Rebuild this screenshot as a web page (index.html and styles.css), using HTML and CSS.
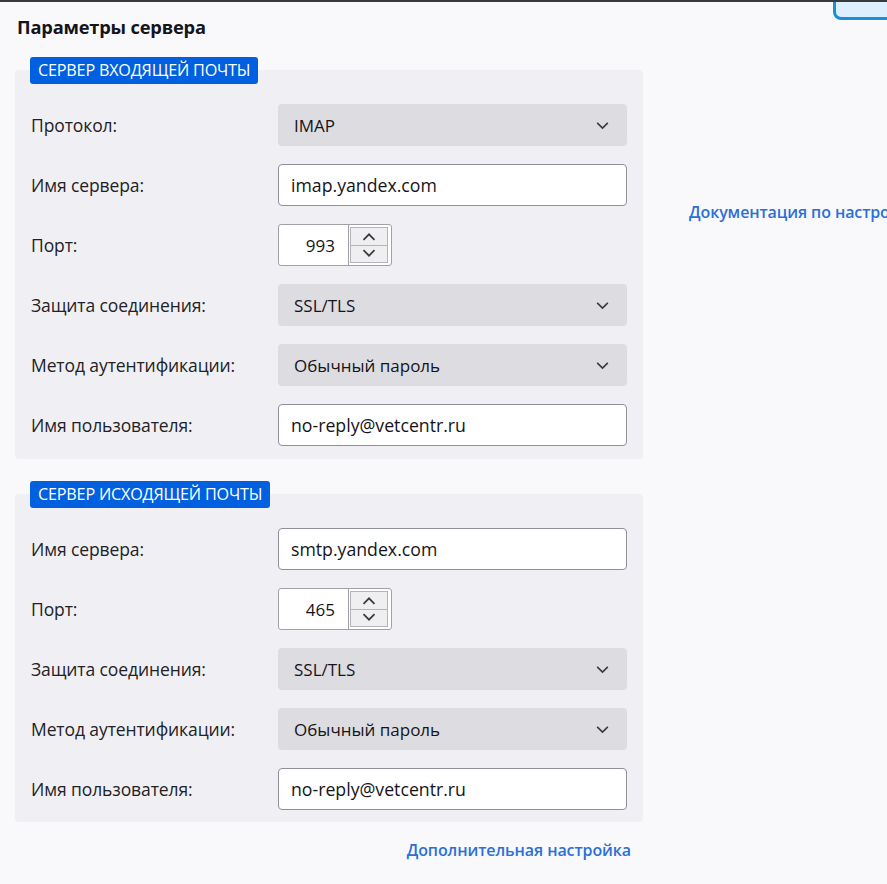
FILE: index.html
```html
<!DOCTYPE html>
<html lang="ru">
<head>
<meta charset="utf-8">
<link rel="stylesheet" href="styles.css">
</head>
<body>
<div class="page">
  <div class="main">
    <h1 class="title">Параметры сервера</h1>

    <div class="group">
      <div class="badge">Сервер входящей почты</div>
      <div class="box box-in">
        <div class="row"><span class="label">Протокол:</span><div class="select"><span>IMAP</span><svg class="chev" viewBox="0 0 16 16"><path d="M3 5.5l5 5 5-5" /></svg></div></div>
        <div class="row"><span class="label">Имя сервера:</span><div class="input">imap.yandex.com</div></div>
        <div class="row"><span class="label">Порт:</span>
          <div class="spin"><div class="num">993</div><div class="btns"><div class="sbtn"><svg viewBox="0 0 16 10"><path d="M3 8l5-5 5 5"/></svg></div><div class="sbtn"><svg viewBox="0 0 16 10"><path d="M3 2l5 5 5-5"/></svg></div></div></div>
        </div>
        <div class="row"><span class="label">Защита соединения:</span><div class="select"><span>SSL/TLS</span><svg class="chev" viewBox="0 0 16 16"><path d="M3 5.5l5 5 5-5" /></svg></div></div>
        <div class="row"><span class="label">Метод аутентификации:</span><div class="select"><span>Обычный пароль</span><svg class="chev" viewBox="0 0 16 16"><path d="M3 5.5l5 5 5-5" /></svg></div></div>
        <div class="row"><span class="label">Имя пользователя:</span><div class="input">no-reply@vetcentr.ru</div></div>
      </div>
    </div>

    <div class="group group2">
      <div class="badge">Сервер исходящей почты</div>
      <div class="box box-out">
        <div class="row"><span class="label">Имя сервера:</span><div class="input">smtp.yandex.com</div></div>
        <div class="row"><span class="label">Порт:</span>
          <div class="spin"><div class="num">465</div><div class="btns"><div class="sbtn"><svg viewBox="0 0 16 10"><path d="M3 8l5-5 5 5"/></svg></div><div class="sbtn"><svg viewBox="0 0 16 10"><path d="M3 2l5 5 5-5"/></svg></div></div></div>
        </div>
        <div class="row"><span class="label">Защита соединения:</span><div class="select"><span>SSL/TLS</span><svg class="chev" viewBox="0 0 16 16"><path d="M3 5.5l5 5 5-5" /></svg></div></div>
        <div class="row"><span class="label">Метод аутентификации:</span><div class="select"><span>Обычный пароль</span><svg class="chev" viewBox="0 0 16 16"><path d="M3 5.5l5 5 5-5" /></svg></div></div>
        <div class="row"><span class="label">Имя пользователя:</span><div class="input">no-reply@vetcentr.ru</div></div>
      </div>
    </div>

    <div class="more"><a class="link">Дополнительная настройка</a></div>
  </div>

  <div class="side">
    <div class="topbtn"></div>
    <div class="docwrap"><a class="link doc">Документация по настройке</a></div>
  </div>
</div>
</body>
</html>
```

FILE: styles.css
```css
* { box-sizing: border-box; }
html, body { margin: 0; padding: 0; }
body {
  background: #f9f9fb;
  font-family: "Open Sans", "Noto Sans", sans-serif;
  color: #1f1f23;
  width: 887px;
  height: 884px;
  overflow: hidden;
  border-top: 2px solid #3a3a3e;
}
.page {
  display: flex;
  height: 882px;
}
.main {
  width: 643px;
  flex: none;
  padding-left: 15px;
}
.title {
  margin: 0;
  padding: 13px 0 0 2px;
  font-size: 18.3px;
  font-weight: 700;
  line-height: 24px;
  height: 55px;
  color: #15141a;
  letter-spacing: -0.2px;
}
.group { display: flex; flex-direction: column; }
.badge {
  align-self: flex-start;
  margin-left: 15px;
  background: #0060df;
  color: #fff;
  text-transform: uppercase;
  font-size: 16.2px;
  line-height: 27px;
  height: 27px;
  padding: 0 8px;
  border-radius: 3px;
  position: relative;
  z-index: 1;
  margin-bottom: -14px;
  letter-spacing: -0.2px;
}
.box {
  background: #f0f0f4;
  border-radius: 4px;
  display: flex;
  flex-direction: column;
  gap: 18px;
  padding: 34px 16px 13px 16px;
}
.group2 { margin-top: 22px; }
.box-out { padding-top: 34px; padding-bottom: 12px; }
.row {
  display: flex;
  align-items: center;
  height: 42px;
}
.label {
  width: 247px;
  flex: none;
  font-size: 17.5px;
  color: #222226;
  letter-spacing: -0.1px;
}
.select {
  width: 349px;
  height: 42px;
  background: #dddde1;
  border-radius: 4px;
  display: flex;
  align-items: center;
  justify-content: space-between;
  padding: 0 16px 0 16px;
  font-size: 17px;
  color: #15141a;
}
.chev { width: 17px; height: 17px; fill: none; stroke: #3a3a3e; stroke-width: 1.5; }
.input {
  width: 349px;
  height: 42px;
  background: #fff;
  border: 1px solid #8f8f9d;
  border-radius: 4px;
  display: flex;
  align-items: center;
  padding: 0 12px;
  font-size: 17.7px;
  color: #15141a;
}
.spin {
  display: flex;
  height: 42px;
  width: 114px;
  border: 1px solid #a0a0a8;
  border-radius: 3px;
  background: #fff;
}
.num {
  width: 70px;
  display: flex;
  align-items: center;
  justify-content: flex-end;
  padding-right: 13px;
  font-size: 17px;
  color: #15141a;
  border-right: 1px solid #a0a0a8;
}
.btns {
  flex: 1;
  display: flex;
  flex-direction: column;
  padding: 2px 3px 2px 1px;
}
.sbtn {
  flex: 1;
  background: #efeff1;
  border: 1px solid #b4b4ba;
  display: flex;
  align-items: center;
  justify-content: center;
}
.sbtn + .sbtn { border-top: none; }
.sbtn svg { width: 18px; height: 11px; fill: none; stroke: #3a3a40; stroke-width: 1.6; }
.more {
  display: flex;
  justify-content: flex-end;
  padding: 17px 12px 0 0;
}
.link {
  color: #2c6fd6;
  font-size: 16px;
  font-weight: 600;
  white-space: nowrap;
  letter-spacing: -0.1px;
}
.side {
  flex: 1;
  display: flex;
  flex-direction: column;
  padding-left: 46px;
  overflow: hidden;
}
.topbtn {
  align-self: flex-start;
  margin-left: 144px;
  margin-top: -10px;
  width: 80px;
  height: 28px;
  background: #dcefff;
  border: 3px solid #1b8fd6;
  border-radius: 8px;
}
.docwrap { margin-top: 181px; }
```
